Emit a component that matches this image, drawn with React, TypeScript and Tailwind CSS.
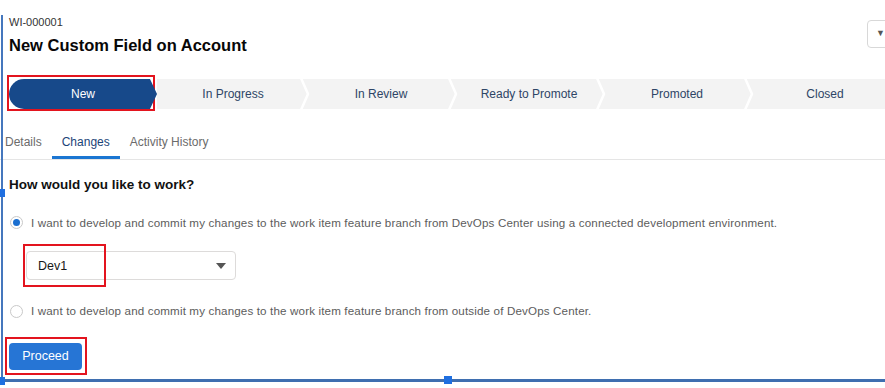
import React from 'react';

const stages = ['New', 'In Progress', 'In Review', 'Ready to Promote', 'Promoted', 'Closed'];
const tabs = ['Details', 'Changes', 'Activity History'];

const Chevron = () => (
  <svg className="absolute right-[-6px] top-0 z-10" width="12" height="30" viewBox="0 0 12 30">
    <polyline points="2,-1 9,15 2,31" fill="none" stroke="#ffffff" strokeWidth="2.5" />
  </svg>
);

const Radio = ({ checked }: { checked?: boolean }) => (
  <span className="flex h-[13px] w-[13px] shrink-0 items-center justify-center rounded-full border border-[#c9c9c9] bg-white">
    {checked && <span className="h-[7px] w-[7px] rounded-full bg-[#1b6fd0]" />}
  </span>
);

const App = () => {
  return (
    <div
      className="relative h-[388px] w-[885px] overflow-hidden bg-white text-[#181818]"
      style={{ fontFamily: '"Liberation Sans", Arial, sans-serif' }}
    >
      {/* header */}
      <div className="flex items-start justify-between pl-[9px] pt-[16px]">
        <div>
          <div className="text-[11px] leading-[13px] text-[#333]">WI-000001</div>
          <div className="mt-[5px] text-[16.5px] font-bold leading-[22px] text-[#080707]">
            New Custom Field on Account
          </div>
        </div>
        <button className="mr-[-16px] mt-[4px] flex h-[28px] w-[34px] items-center rounded-[4px] border border-[#d8d8d8] bg-white pl-[8px] text-[9px] text-[#555]">
          ▼
        </button>
      </div>

      {/* path */}
      <div className="ml-[9px] mt-[23px] flex h-[30px] w-[888px]">
        {stages.map((s, i) => (
          <div
            key={s}
            className={`relative flex w-[148px] shrink-0 items-center justify-center text-[12px] ${
              i === 0
                ? 'z-20 rounded-l-full bg-[#17498a] text-white [clip-path:polygon(0_0,calc(100%-7px)_0,100%_50%,calc(100%-7px)_100%,0_100%)]'
                : 'bg-[#f3f3f3] text-[#2e4566]'
            }`}
          >
            <span className={i === 0 ? '' : 'pl-[4px]'}>{s}</span>
            {i > 0 && <Chevron />}
          </div>
        ))}
      </div>

      {/* tabs */}
      <div className="mt-[19px] flex border-b border-[#e5e5e5]">
        <div className="ml-[-5px] flex">
          {tabs.map((t) => (
            <div
              key={t}
              className={`px-[10px] pb-[6px] pt-[7px] text-[12px] leading-[15px] ${
                t === 'Changes'
                  ? 'border-b-[3px] border-[#1b76d2] text-[#1b4478]'
                  : 'border-b-[3px] border-transparent text-[#6b6b6b]'
              }`}
            >
              {t}
            </div>
          ))}
        </div>
      </div>

      {/* body */}
      <div className="pl-[9px]">
        <div className="mt-[16px] text-[13.5px] font-bold leading-[18px] text-[#111]">
          How would you like to work?
        </div>

        <div className="mt-[20px] flex items-center gap-[8px] pl-[1px]">
          <Radio checked />
          <span className="text-[11.6px] tracking-[0.15px] text-[#5c5c5c]">
            I want to develop and commit my changes to the work item feature branch from DevOps Center using a
            connected development environment.
          </span>
        </div>

        <div className="ml-[17px] mt-[20px] flex h-[29px] w-[210px] items-center justify-between rounded-[4px] border border-[#dddbda] bg-white pl-[11px] pr-[9px]">
          <span className="text-[12.5px] text-[#181818]">Dev1</span>
          <svg width="10" height="6" viewBox="0 0 10 6">
            <polygon points="0,0 10,0 5,6" fill="#555" />
          </svg>
        </div>

        <div className="mt-[22px] flex items-center gap-[8px] pl-[1px]">
          <Radio />
          <span className="text-[11.6px] tracking-[0.15px] text-[#5c5c5c]">
            I want to develop and commit my changes to the work item feature branch from outside of DevOps Center.
          </span>
        </div>

        <button className="mt-[23px] flex h-[27px] w-[73px] items-center justify-center rounded-[4px] bg-[#2675d5] text-[12.5px] text-white">
          Proceed
        </button>
      </div>

      {/* selection frame */}
      <div className="absolute left-[1px] top-[15px] h-[367px] w-[2px] bg-[#4577bd]" />
      <div className="absolute left-0 top-[189px] h-[8px] w-[5px] bg-[#1f6fe0]" />
      <div className="absolute left-0 top-[379px] h-[3px] w-[885px] bg-[#3f6fb0]" />
      <div className="absolute left-[444px] top-[376px] h-[8px] w-[8px] bg-[#1f6fe0]" />
      <div className="absolute left-0 top-[377px] h-[8px] w-[5px] bg-[#1f6fe0]" />

      {/* annotations */}
      <div className="absolute left-[7px] top-[75px] h-[36px] w-[148px] border-[2.5px] border-[#e3141e]" />
      <div className="absolute left-[23px] top-[244px] h-[43px] w-[83px] border-[2.5px] border-[#e3141e]" />
      <div className="absolute left-[5px] top-[337px] h-[38px] w-[82px] border-[2.5px] border-[#e3141e]" />
    </div>
  );
};

export default App;
